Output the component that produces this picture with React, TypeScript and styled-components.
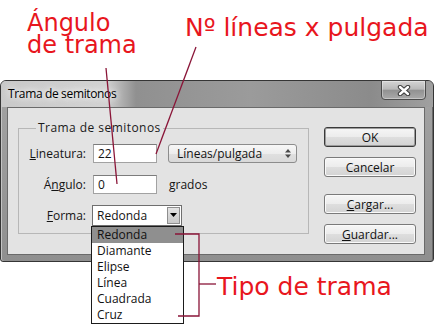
import React from 'react';
import styled, { createGlobalStyle } from 'styled-components';

const GlobalStyle = createGlobalStyle`
  html, body {
    margin: 0;
    padding: 0;
    background: #fff;
  }
  #root {
    width: 434px;
    height: 334px;
  }
`;

const Canvas = styled.div`
  position: relative;
  width: 434px;
  height: 334px;
  overflow: hidden;
  background: #fff;
  font-family: 'Open Sans', 'Noto Sans', sans-serif;
  font-size: 12px;
  color: #141414;
`;

const NoteRow = styled.div`
  display: flex;
  align-items: flex-start;
  height: 80px;
`;

const Note = styled.div<{ $left: number; $top: number; $size: number; $lh: number; $width?: number }>`
  margin-left: ${(p) => p.$left}px;
  margin-top: ${(p) => p.$top}px;
  width: ${(p) => (p.$width ? `${p.$width}px` : 'auto')};
  font-family: 'DejaVu Sans', 'Verdana', sans-serif;
  font-size: ${(p) => p.$size}px;
  line-height: ${(p) => p.$lh}px;
  color: #e8161d;
  white-space: nowrap;
  flex: none;
`;

const Window = styled.div`
  width: 434px;
  height: 182px;
  box-sizing: border-box;
  border: 1px solid #353535;
  border-radius: 6px 6px 3px 3px;
  background: linear-gradient(to bottom, #a4a4a4, #8f8f8f);
  box-shadow: inset 1px 0 0 #c4c4c4, inset -1px 0 0 #6a6a6a;
  display: flex;
  flex-direction: column;
`;

const TitleBar = styled.div`
  height: 26px;
  display: flex;
  align-items: flex-start;
  padding-left: 7px;
  border-radius: 5px 5px 0 0;
  background: linear-gradient(
    to right,
    #c9c9c9 0px,
    #d2d2d2 105px,
    #909090 135px,
    #9b9b9b 250px,
    #8b8b8b 370px,
    #a0a0a0 432px
  );
`;

const Title = styled.div`
  padding-top: 5px;
  line-height: 16px;
  font-size: 12px;
  letter-spacing: -0.35px;
  color: #000;
  text-shadow: 0 0 6px #fff, 0 0 10px #fff;
`;

const CloseButton = styled.div`
  margin-left: auto;
  margin-right: 7px;
  margin-top: -1px;
  width: 45px;
  height: 20px;
  box-sizing: border-box;
  border: 1px solid #4b4b4b;
  border-radius: 0 0 4px 4px;
  background: linear-gradient(to bottom, #d4d4d4 0%, #b9b9b9 45%, #929292 52%, #a9a9a9 100%);
  box-shadow: inset 0 0 0 1px rgba(255, 255, 255, 0.35);
  display: flex;
  align-items: center;
  justify-content: center;
`;

const Client = styled.div`
  margin: 0 8px 0 6px;
  height: 148px;
  box-sizing: border-box;
  border: 1px solid #6a6a6a;
  background: #e3e3e3;
  display: flex;
  align-items: flex-start;
  padding-left: 10px;
`;

const Group = styled.fieldset`
  margin: 12px 0 0 0;
  padding: 0;
  width: 291px;
  height: 114px;
  box-sizing: border-box;
  border: 1px solid #b7b7b7;
  min-width: 0;
`;

const Legend = styled.legend`
  margin-left: 17px;
  padding: 0 2px;
  font-size: 12px;
  line-height: 16px;
  letter-spacing: 0.45px;
  color: #1a1a1a;
`;

const Rows = styled.div`
  display: flex;
  flex-direction: column;
  gap: 11px;
  padding-top: 7px;
`;

const Row = styled.div`
  display: flex;
  align-items: center;
  height: 20px;
`;

const FieldLabel = styled.div<{ $gap?: number }>`
  width: 67px;
  text-align: right;
  margin-right: ${(p) => p.$gap ?? 7}px;
  white-space: nowrap;
`;

const TextBox = styled.div`
  width: 64px;
  height: 19px;
  box-sizing: border-box;
  border: 1px solid #a2a2a2;
  border-top-color: #7c7c7c;
  background: #fff;
  padding-left: 4px;
  line-height: 17px;
`;

const Select = styled.div`
  margin-left: 11px;
  width: 129px;
  height: 19px;
  box-sizing: border-box;
  border: 1px solid #8c8c8c;
  border-radius: 3px;
  background: linear-gradient(to bottom, #f7f7f7 0%, #ededed 50%, #e0e0e0 51%, #d9d9d9 100%);
  display: flex;
  align-items: center;
  justify-content: space-between;
  padding: 0 5px 0 8px;
  line-height: 17px;
`;

const Unit = styled.div`
  margin-left: 12px;
`;

const Combo = styled.div`
  position: relative;
  width: 90px;
  height: 21px;
  box-sizing: border-box;
  border: 1px solid #6f6f6f;
  background: #fff;
  display: flex;
  align-items: center;
  padding-left: 4px;
`;

const ComboText = styled.div`
  flex: 1;
  line-height: 19px;
`;

const ComboButton = styled.div`
  width: 13px;
  height: 17px;
  margin-right: 1px;
  box-sizing: border-box;
  border: 1px solid #8e8e8e;
  background: linear-gradient(to bottom, #e4e4e4, #c9c9c9);
  display: flex;
  align-items: center;
  justify-content: center;
`;

const ListPopup = styled.ul`
  position: absolute;
  top: calc(100% + 1px);
  left: -2px;
  width: 93px;
  box-sizing: border-box;
  margin: 0;
  padding: 0;
  list-style: none;
  border: 1px solid #1b1b1b;
  background: #fff;
  z-index: 2;
`;

const ListItem = styled.li<{ $active?: boolean }>`
  height: 16px;
  line-height: 16px;
  padding-left: 5px;
  background: ${(p) => (p.$active ? '#8f8f8f' : 'transparent')};
  color: #111;
`;

const ButtonColumn = styled.div`
  margin-left: 15px;
  margin-top: 19px;
  width: 92px;
  display: flex;
  flex-direction: column;
`;

const Button = styled.button<{ $mt?: number; $default?: boolean }>`
  margin-top: ${(p) => p.$mt ?? 0}px;
  height: 20px;
  width: 92px;
  box-sizing: border-box;
  padding: 0;
  border: 1px solid ${(p) => (p.$default ? '#3a3a3a' : '#7a7a7a')};
  border-radius: 3px;
  background: linear-gradient(to bottom, #f6f6f6 0%, #ececec 50%, #dedede 51%, #d3d3d3 100%);
  box-shadow: ${(p) => (p.$default ? 'inset 0 0 0 1px #9c9c9c' : 'inset 0 0 0 1px #fafafa')};
  font-family: 'Open Sans', 'Noto Sans', sans-serif;
  font-size: 12px;
  line-height: 17px;
  color: #111;
  text-align: center;
`;

const Overlay = styled.svg`
  position: absolute;
  left: 0;
  top: 0;
  pointer-events: none;
  z-index: 5;
`;

const shapes = ['Redonda', 'Diamante', 'Elipse', 'Línea', 'Cuadrada', 'Cruz'];

const App = () => {
  return (
    <>
      <GlobalStyle />
      <Canvas>
        <NoteRow>
          <Note $left={27} $top={12} $size={24} $lh={22} $width={158}>
            Ángulo
            <br />
            de trama
          </Note>
          <Note $left={0} $top={15} $size={25} $lh={25}>
            Nº líneas x pulgada
          </Note>
        </NoteRow>

        <Window>
          <TitleBar>
            <Title>Trama de semitonos</Title>
            <CloseButton>
              <svg width="14" height="11" viewBox="0 0 14 11">
                <path d="M3 2 L11 9 M11 2 L3 9" stroke="#3a3a3a" strokeWidth="4.4" strokeLinecap="round" />
                <path d="M3 2 L11 9 M11 2 L3 9" stroke="#fff" strokeWidth="2.4" strokeLinecap="round" />
              </svg>
            </CloseButton>
          </TitleBar>
          <Client>
            <Group>
              <Legend>Trama de semitonos</Legend>
              <Rows>
                <Row>
                  <FieldLabel>
                    <u>L</u>ineatura:
                  </FieldLabel>
                  <TextBox>22</TextBox>
                  <Select>
                    <span>Líneas/pulgada</span>
                    <svg width="6" height="9" viewBox="0 0 6 9">
                      <polygon points="0,3.5 3,0 6,3.5" fill="#4a4a4a" />
                      <polygon points="0,5.5 3,9 6,5.5" fill="#4a4a4a" />
                    </svg>
                  </Select>
                </Row>
                <Row>
                  <FieldLabel>
                    Á<u>n</u>gulo:
                  </FieldLabel>
                  <TextBox>0</TextBox>
                  <Unit>grados</Unit>
                </Row>
                <Row>
                  <FieldLabel $gap={6}>
                    <u>F</u>orma:
                  </FieldLabel>
                  <Combo>
                    <ComboText>Redonda</ComboText>
                    <ComboButton>
                      <svg width="7" height="4" viewBox="0 0 7 4">
                        <polygon points="0,0 7,0 3.5,4" fill="#000" />
                      </svg>
                    </ComboButton>
                    <ListPopup>
                      {shapes.map((s, i) => (
                        <ListItem key={s} $active={i === 0}>
                          {s}
                        </ListItem>
                      ))}
                    </ListPopup>
                  </Combo>
                </Row>
              </Rows>
            </Group>
            <ButtonColumn>
              <Button $default>OK</Button>
              <Button $mt={10}>Cancelar</Button>
              <Button $mt={17}>
                <u>C</u>argar...
              </Button>
              <Button $mt={10}>
                <u>G</u>uardar...
              </Button>
            </ButtonColumn>
          </Client>
        </Window>

        <Note $left={217} $top={12} $size={25} $lh={25}>
          Tipo de trama
        </Note>

        <Overlay width="434" height="334" viewBox="0 0 434 334">
          <g stroke="#8a1538" strokeWidth="1.3" fill="none">
            <line x1="106" y1="68" x2="117" y2="184" />
            <line x1="196" y1="47" x2="156" y2="154" />
            <polyline points="175,234 199,234 199,316 178,316" />
            <line x1="199" y1="284" x2="216" y2="284" />
          </g>
        </Overlay>
      </Canvas>
    </>
  );
};

export default App;
